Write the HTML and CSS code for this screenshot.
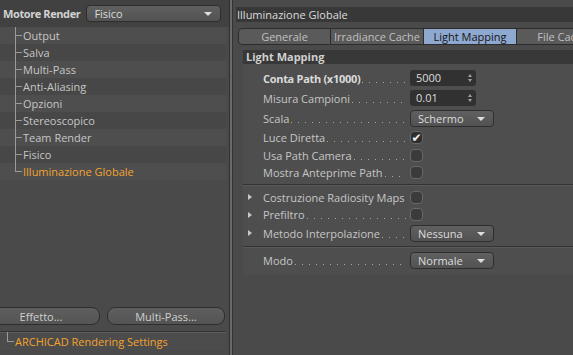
FILE: index.html
```html
<!DOCTYPE html>
<html lang="it">
<head>
<meta charset="UTF-8">
<link rel="stylesheet" href="styles.css">
<title>Impostazioni di Rendering</title>
</head>
<body>

<main class="app">

<!-- left side: renderer + tree -->
<aside class="side">

<div class="sideHead">
<span class="sideLabel">Motore Render</span>
<div class="drop dropWide"><span>Fisico</span><i class="arrow"></i></div>
</div>

<ul class="tree">
<li class="treeItem">Output</li>
<li class="treeItem">Salva</li>
<li class="treeItem">Multi-Pass</li>
<li class="treeItem">Anti-Aliasing</li>
<li class="treeItem">Opzioni</li>
<li class="treeItem">Stereoscopico</li>
<li class="treeItem">Team Render</li>
<li class="treeItem">Fisico</li>
<li class="treeItem treeLast active">Illuminazione Globale</li>
</ul>

<div class="sideFill"></div>

<div class="sideBtns">
<button class="pill pillLeft">Effetto...</button>
<button class="pill">Multi-Pass...</button>
</div>

<div class="presetRow">
<span class="presetName">ARCHICAD Rendering Settings</span>
</div>

</aside>

<div class="split"></div>

<!-- right side: attributes -->
<section class="panel">

<div class="panelTitle">Illuminazione Globale</div>

<div class="tabs">
<div class="tab tabFirst">Generale</div>
<div class="tab">Irradiance Cache</div>
<div class="tab tabOn">Light Mapping</div>
<div class="tab">File Cache</div>
</div>

<div class="group">
<div class="groupHead">Light Mapping</div>

<div class="groupBody">

<div class="row rowTall">
<span class="label strong">Conta Path (x1000)<b class="dots"></b></span>
<div class="num"><span>5000</span><i class="spin"></i></div>
</div>

<div class="row rowTall">
<span class="label">Misura Campioni<b class="dots"></b></span>
<div class="num"><span>0.01</span><i class="spin"></i></div>
</div>

<div class="row rowTall">
<span class="label">Scala<b class="dots"></b></span>
<div class="drop dropField"><span>Schermo</span><i class="arrow"></i></div>
</div>

<div class="row rowMid">
<span class="label">Luce Diretta<b class="dots"></b></span>
<span class="check checkOn">&#10004;</span>
</div>

<div class="row rowMid">
<span class="label">Usa Path Camera<b class="dots"></b></span>
<span class="check"></span>
</div>

<div class="row">
<span class="label">Mostra Anteprime Path<b class="dots"></b></span>
<span class="check"></span>
</div>

<hr class="sep">

<div class="row rowMid">
<i class="twist"></i>
<span class="label">Costruzione Radiosity Maps<b class="dots"></b></span>
<span class="check"></span>
</div>

<div class="row">
<i class="twist"></i>
<span class="label">Prefiltro<b class="dots"></b></span>
<span class="check"></span>
</div>

<div class="row rowTall">
<i class="twist"></i>
<span class="label">Metodo Interpolazione<b class="dots"></b></span>
<div class="drop dropField"><span>Nessuna</span><i class="arrow"></i></div>
</div>

<hr class="sep">

<div class="row rowTall">
<span class="label">Modo<b class="dots"></b></span>
<div class="drop dropField"><span>Normale</span><i class="arrow"></i></div>
</div>

</div>
</div>

</section>

</main>

</body>
</html>
```

FILE: styles.css
```css
*,*:before,*:after{
margin:0;
padding:0;
box-sizing:border-box;
}

:root{
--bg:#4a4a4a;
--bg_dark:#383838;
--row_light:#4e4e4e;
--row_dark:#474747;
--text:#c6c6c6;
--text_hi:#dcdcdc;
--orange:#f2a32e;
--line:#2c2c2c;
--tree_line:#9a9a9a;
}

html,body{
height:100%;
}

body{
background:var(--bg);
color:var(--text);
font-family:"Open Sans","DejaVu Sans",sans-serif;
font-size:11px;
overflow:hidden;
}

ul{
list-style:none;
}

.app{
display:flex;
height:100%;
}

/* ---------- left ---------- */

.side{
width:229px;
display:flex;
flex-direction:column;
}

.sideHead{
height:27px;
display:flex;
align-items:center;
gap:6px;
padding:0 5px 0 3px;
background:#414141;
}

.sideLabel{
font-weight:bold;
letter-spacing:-0.4px;
color:#d2d2d2;
}

.drop{
position:relative;
height:17px;
display:flex;
align-items:center;
padding:0 0 0 7px;
color:var(--text_hi);
background:linear-gradient(#606060,#525252);
border:1px solid #2e2e2e;
border-radius:4px;
}

.dropWide{
flex:1;
margin-right:3px;
}

.arrow{
position:absolute;
right:8px;
top:6px;
border-left:4px solid transparent;
border-right:4px solid transparent;
border-top:4px solid #dedede;
}

.tree{
padding-right:3px;
}

.treeItem{
position:relative;
height:17px;
line-height:17px;
padding-left:23px;
color:var(--text);
}

.treeItem:nth-child(odd){
background:var(--row_light);
}

.treeItem:nth-child(even){
background:var(--row_dark);
}

.treeItem:before{
content:"";
position:absolute;
left:15px;
top:0;
height:17px;
border-left:1px solid var(--tree_line);
}

.treeItem:after{
content:"";
position:absolute;
left:15px;
top:8px;
width:7px;
border-top:1px solid var(--tree_line);
}

.treeLast:before{
height:9px;
}

.treeItem.active{
color:var(--orange);
}

.sideFill{
flex:1;
}

.sideBtns{
display:flex;
gap:7px;
padding:0 4px 0 0;
margin-bottom:6px;
}

.pill{
flex:1;
height:18px;
font-family:inherit;
font-size:11px;
color:#cfcfcf;
background:linear-gradient(#5e5e5e,#545454);
border:1px solid #2e2e2e;
border-radius:8px;
}

.pillLeft{
flex:0 0 118px;
margin-left:-18px;
}

.presetRow{
position:relative;
height:19px;
margin:0 3px 5px 0;
padding-left:15px;
line-height:19px;
border-top:1px solid #333;
box-shadow:inset 0 1px 0 #5c5c5c;
background:#4c4c4c;
}

.presetRow:before{
content:"";
position:absolute;
left:7px;
top:0;
width:7px;
height:10px;
border-left:1px solid var(--tree_line);
border-bottom:1px solid var(--tree_line);
}

.presetName{
color:var(--orange);
}

.split{
width:2px;
background:#6a6a6a;
border-left:1px solid #303030;
box-sizing:content-box;
border-right:1px solid #333;
}

/* ---------- right ---------- */

.panel{
flex:1;
min-width:0;
overflow:hidden;
}

.panelTitle{
margin:7px 0 0 3px;
height:15px;
line-height:15px;
padding-left:1px;
color:var(--text_hi);
background:var(--bg_dark);
}

.tabs{
display:flex;
margin:6px 0 0 5px;
height:17px;
}

.tab{
flex:0 0 93px;
text-align:center;
line-height:15px;
color:#c0c0c0;
background:#5a5a5a;
border:1px solid var(--line);
border-left:none;
}

.tabFirst{
border-left:1px solid var(--line);
border-radius:4px 0 0 4px;
}

.tabOn{
color:#161616;
background:#8ea8d0;
}

.group{
margin:5px 0 0 10px;
}

.groupHead{
height:14px;
line-height:14px;
padding-left:3px;
font-weight:bold;
color:#d0d0d0;
background:var(--bg_dark);
}

.groupBody{
padding:4px 0 5px 0;
background:var(--row_light);
}

.row{
position:relative;
display:flex;
align-items:center;
gap:4px;
height:17px;
padding-left:20px;
}

.rowMid{
height:18px;
}

.rowTall{
height:20px;
}

.label{
flex:0 0 143px;
display:flex;
align-items:baseline;
white-space:nowrap;
overflow:hidden;
}

.strong{
font-weight:bold;
letter-spacing:-0.3px;
color:#dadada;
}

.dots{
flex:1;
height:9px;
margin-left:2px;
background-image:linear-gradient(to right,#a8a8a8 1px,transparent 1px);
background-size:7px 1px;
background-repeat:repeat-x;
background-position:0 100%;
}

.num{
position:relative;
width:66px;
height:16px;
line-height:16px;
padding-left:6px;
color:var(--text_hi);
background:#313131;
border-radius:3px;
}

.spin:before,.spin:after{
content:"";
position:absolute;
right:4px;
border-left:2px solid transparent;
border-right:2px solid transparent;
}

.spin:before{
top:4px;
border-bottom:3px solid #a0a0a0;
}

.spin:after{
top:9px;
border-top:3px solid #a0a0a0;
}

.dropField{
width:84px;
}

.check{
width:13px;
height:13px;
background:#3b3b3b;
border:1px solid #686868;
border-radius:4px;
font-size:12px;
line-height:11px;
color:#ececec;
text-align:center;
}

.checkOn{
background:#2e2e2e;
}

.twist{
position:absolute;
left:5px;
top:50%;
margin-top:-3px;
border-top:3px solid transparent;
border-bottom:3px solid transparent;
border-left:4px solid #c8c8c8;
}

.sep{
height:2px;
margin:3px 0 2px 0;
border:none;
border-top:1px solid #333;
border-bottom:1px solid #5a5a5a;
}
```
